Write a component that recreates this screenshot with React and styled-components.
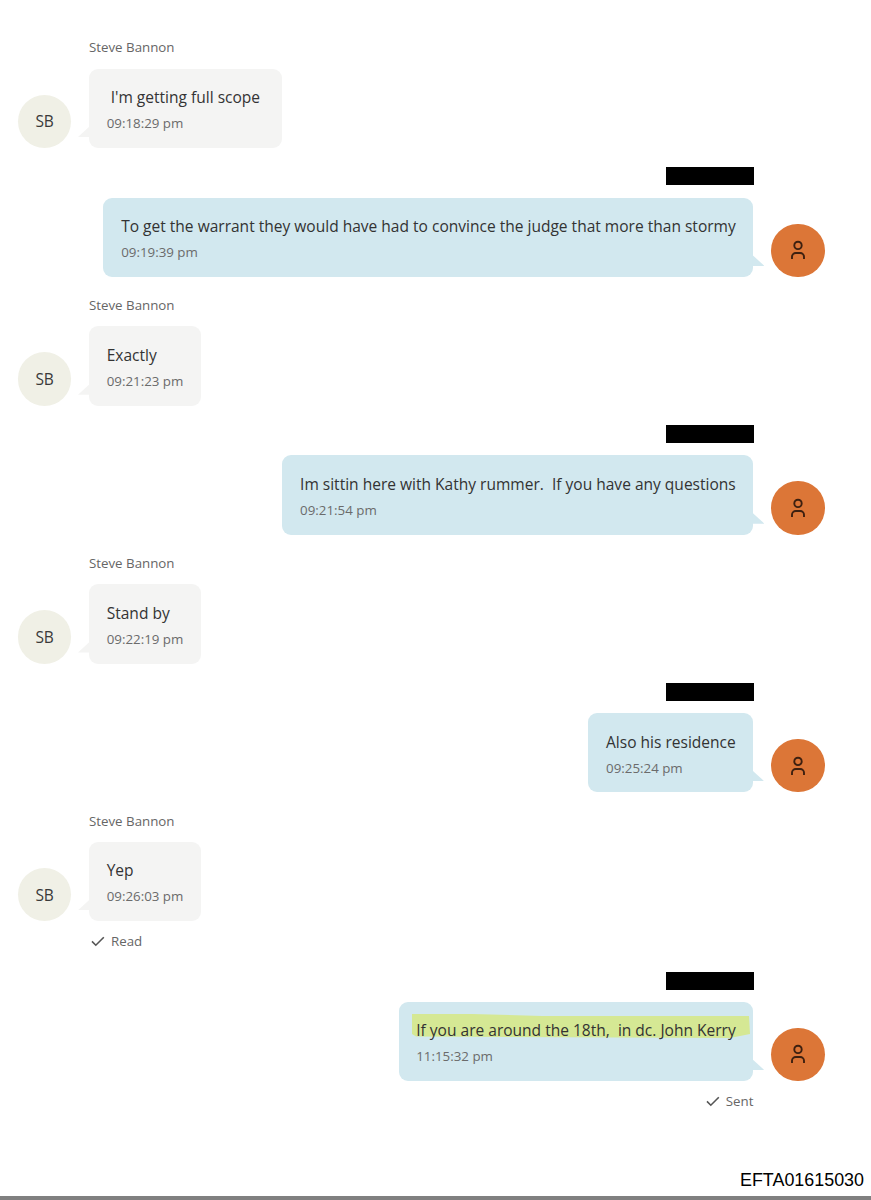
import React from 'react';
import styled, { createGlobalStyle, css } from 'styled-components';

const messages = [
    { id: 1, author: 'Steve Bannon', text: " I'm getting full scope ", time: '09:18:29 pm' },
    { id: 2, own: true, text: 'To get the warrant they would have had to convince the judge that more than stormy', time: '09:19:39 pm' },
    { id: 3, author: 'Steve Bannon', text: 'Exactly', time: '09:21:23 pm' },
    { id: 4, own: true, text: 'Im sittin here with Kathy rummer.  If you have any questions', time: '09:21:54 pm' },
    { id: 5, author: 'Steve Bannon', text: 'Stand by', time: '09:22:19 pm' },
    { id: 6, own: true, text: 'Also his residence', time: '09:25:24 pm' },
    { id: 7, author: 'Steve Bannon', text: 'Yep', time: '09:26:03 pm', status: 'Read' },
    { id: 8, own: true, text: 'If you are around the 18th,  in dc. John Kerry', time: '11:15:32 pm', status: 'Sent', marked: true },
];

const PersonIcon = () => (
    <svg width="16" height="20" viewBox="0 0 16 20" fill="none" stroke="#3d2010" strokeWidth="1.9">
        <circle cx="8" cy="5.4" r="3.7" />
        <path d="M2 19V16.8a3.8 3.8 0 0 1 3.8-3.8h4.4a3.8 3.8 0 0 1 3.8 3.8v2.2" />
    </svg>
);

const CheckIcon = () => (
    <svg width="14" height="12" viewBox="0 0 14 12" fill="none" stroke="#555" strokeWidth="1.6">
        <path d="M1 6.4 4.8 10.2 12.8 2.2" />
    </svg>
);

const Marker = () => (
    <MarkerSvg viewBox="0 0 338 26" preserveAspectRatio="none">
        <path d="M0 0 60 0 130 2 337 2 338 20 318 24 4 22.5 0 20Z" fill="#d5e894" />
    </MarkerSvg>
);

const Message = ({ message }) => {
    const { own, author, text, time, status, marked } = message;

    return (
        <Entry $own={own}>
            <NameRow>{own ? <Redaction /> : author}</NameRow>
            <BubbleRow $own={own}>
                <Avatar $own={own}>{own ? <PersonIcon /> : 'SB'}</Avatar>
                <Bubble $own={own}>
                    {marked && <Marker />}
                    <Text>{text}</Text>
                    <Time>{time}</Time>
                </Bubble>
            </BubbleRow>
            {status && (
                <Status $own={own}>
                    <CheckIcon /> {status}
                </Status>
            )}
        </Entry>
    );
};

const App = () => (
    <Page>
        <GlobalStyle />
        <Thread>
            {messages.map(message => (
                <Message key={message.id} message={message} />
            ))}
        </Thread>
        <Footer>EFTA01615030</Footer>
    </Page>
);

export default App;

const GlobalStyle = createGlobalStyle`
  * { box-sizing: border-box; }
  body { margin: 0; background: #fff; }
`;

const Page = styled.div`
  height: 1200px;
  display: flex; flex-direction: column; justify-content: space-between;
  background: #fff;
  font-family: "Open Sans", "Noto Sans", sans-serif;
`;

const Thread = styled.main`
  padding: 36.45px 46.4px 0 17.8px;
  display: flex; flex-direction: column; gap: 17.3px;
`;

const Entry = styled.section`
  display: flex; flex-direction: column;
  align-items: ${({ $own }) => $own ? 'flex-end' : 'flex-start'};
`;

const NameRow = styled.div`
  height: 32.2px;
  padding: 0 71.2px;
  line-height: 23.4px;
  font-size: 13.3px;
  color: #666;
`;

const Redaction = styled.div`
  width: 88px; height: 18px;
  margin: 2px -0.3px 0 0;
  background: #000;
`;

const BubbleRow = styled.div`
  display: flex; align-items: flex-end; gap: 17.8px;
  flex-direction: ${({ $own }) => $own ? 'row-reverse' : 'row'};
`;

const Avatar = styled.div`
  width: 53.4px; height: 53.4px;
  flex: none;
  display: flex; align-items: center; justify-content: center;
  border-radius: 50%;
  background: ${({ $own }) => $own ? '#dc7637' : '#f0f0e6'};
  color: #3a3a3a;
  font-size: 15.5px;
  letter-spacing: -0.3px;
`;

const Bubble = styled.div`
  position: relative;
  height: 79.4px;
  padding: 16.6px 17.7px 0;
  border-radius: 9px;
  background: ${({ $own }) => $own ? '#d2e8ef' : '#f4f4f3'};

  &::after {
    content: "";
    position: absolute; bottom: 11px;
    width: 12px; height: 11px;
    background: inherit;
    ${({ $own }) => $own
        ? css`right: -11px; clip-path: polygon(0 0, 100% 100%, 0 100%);`
        : css`left: -11px; clip-path: polygon(100% 0, 100% 100%, 0 100%);`}
  }
`;

const MarkerSvg = styled.svg`
  position: absolute; left: 13px; top: 12px;
  width: 338px; height: 26px;
`;

const Text = styled.div`
  position: relative;
  line-height: 24px;
  font-size: 15.54px;
  color: #333;
  white-space: pre;
`;

const Time = styled.div`
  margin-top: 4px;
  line-height: 20px;
  font-size: 13.33px;
  color: #6b6b6b;
  white-space: nowrap;
`;

const Status = styled.div`
  height: 31px;
  padding: ${({ $own }) => $own ? '8.8px 71.2px 0' : '8.8px 73.2px 0'};
  display: flex; align-items: center; gap: 6px;
  line-height: 20px;
  font-size: 13.3px;
  color: #666;
`;

const Footer = styled.footer`
  height: 34px;
  padding: 4px 7px 0;
  border-bottom: 4px solid #808080;
  text-align: right;
  line-height: 20px;
  font-family: "Liberation Sans", Arial, sans-serif;
  font-size: 17.9px;
  color: #000;
`;
